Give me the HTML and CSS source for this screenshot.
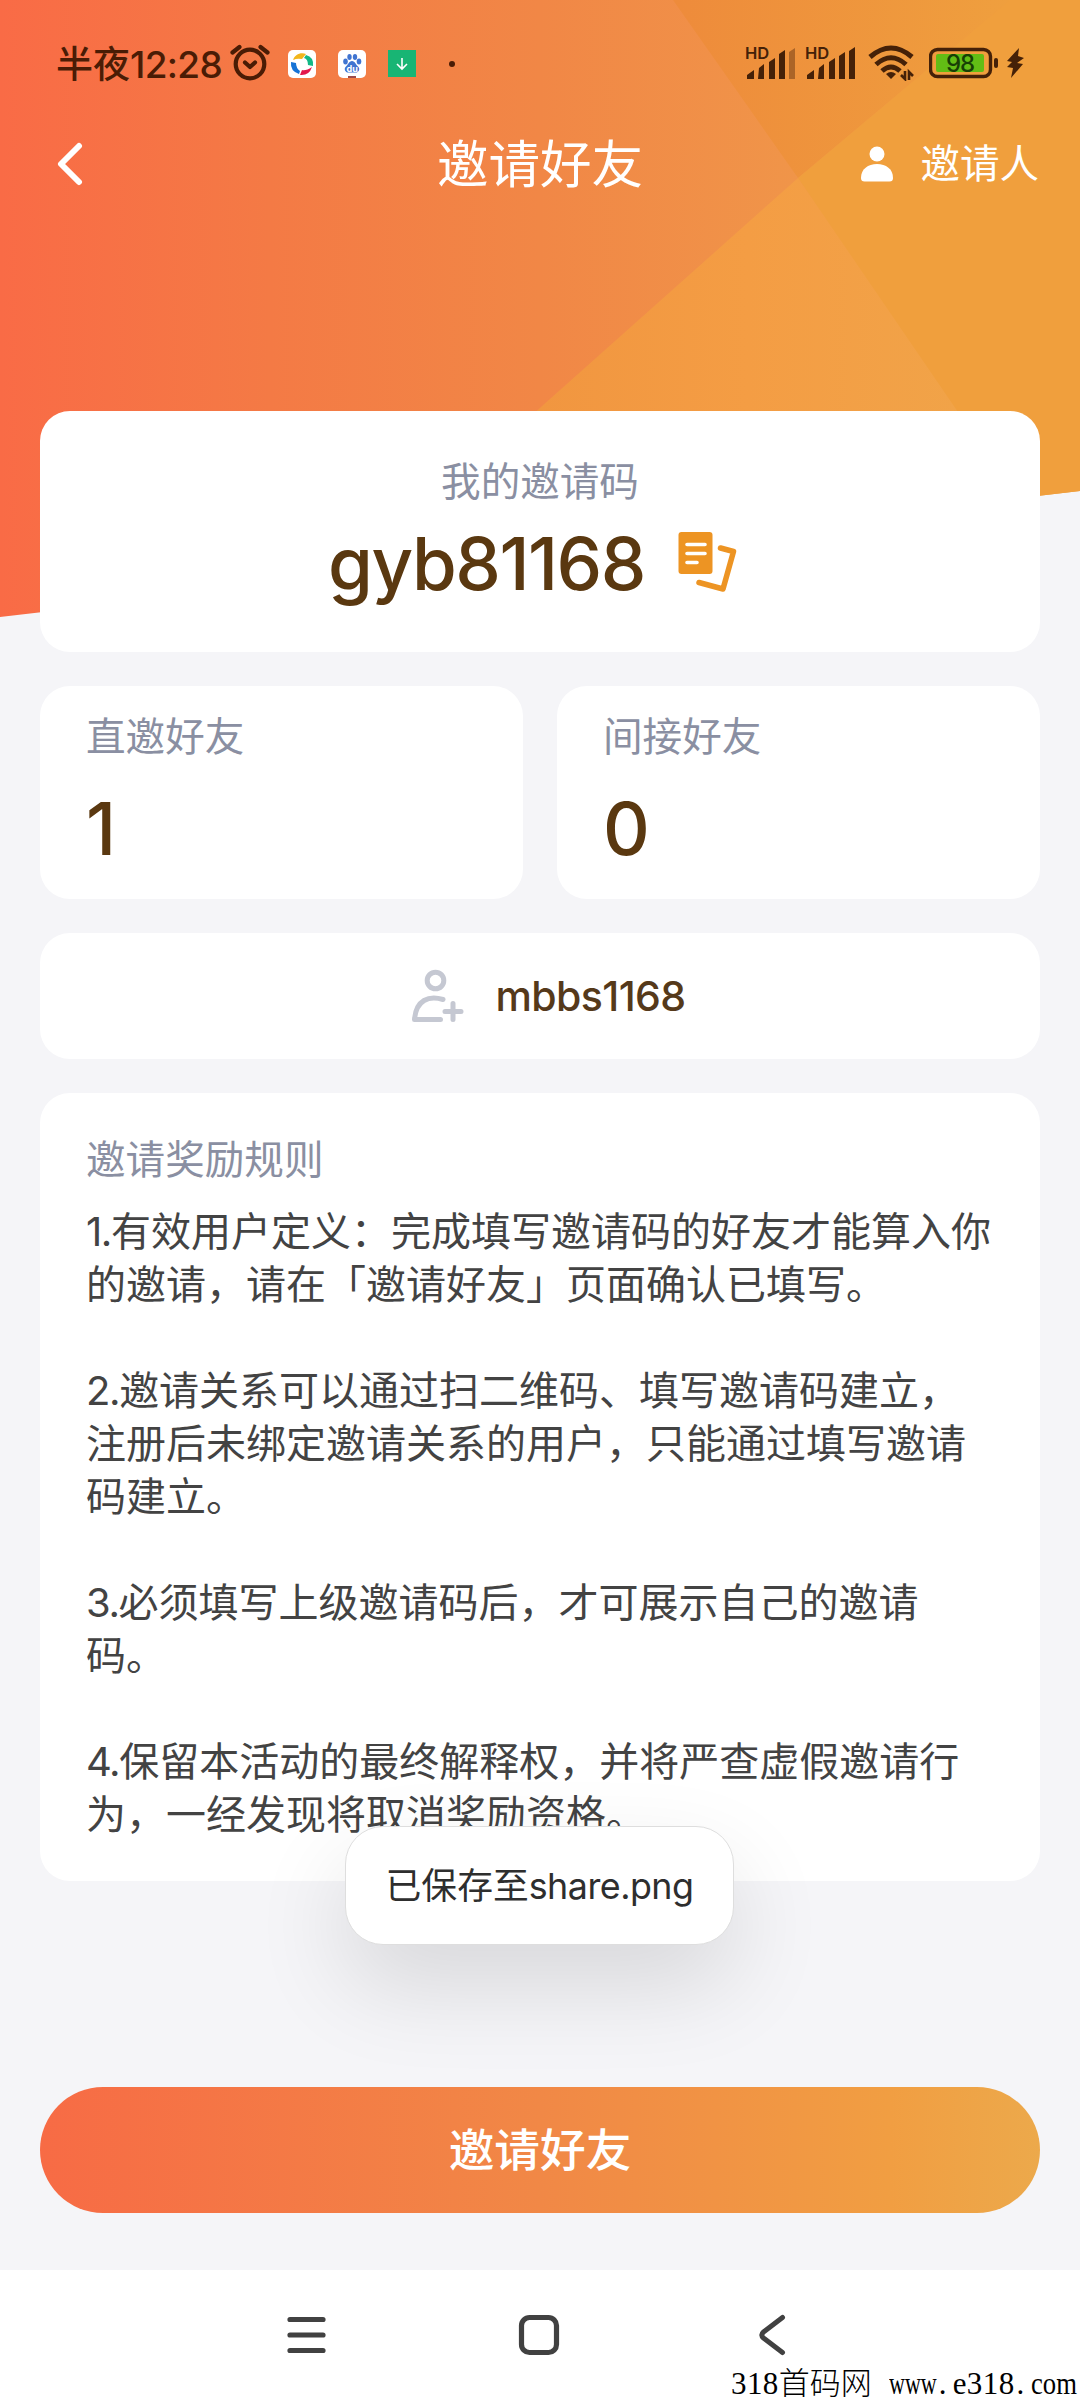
FILE: index.html
```html
<!DOCTYPE html>
<html lang="zh-CN">
<head>
<meta charset="utf-8">
<title>邀请好友</title>
<link rel="stylesheet" href="styles.css">
</head>
<body>
<div class="page">
  <svg class="hero" viewBox="0 0 1080 620" aria-hidden="true">
    <defs>
      <linearGradient id="base" gradientUnits="userSpaceOnUse" x1="0" y1="0" x2="1080" y2="0">
        <stop offset="0" stop-color="#f96b46"/>
        <stop offset=".25" stop-color="#f47a45"/>
        <stop offset=".5" stop-color="#f18746"/>
        <stop offset=".74" stop-color="#f09549"/>
        <stop offset="1" stop-color="#f0a040"/>
      </linearGradient>
      <linearGradient id="top" gradientUnits="userSpaceOnUse" x1="673" y1="0" x2="1010" y2="0">
        <stop offset="0" stop-color="#ee8b3b"/>
        <stop offset="1" stop-color="#ef9f3e"/>
      </linearGradient>
      <linearGradient id="low" gradientUnits="userSpaceOnUse" x1="537" y1="0" x2="957" y2="0">
        <stop offset="0" stop-color="#f19640"/>
        <stop offset=".5" stop-color="#f49d44"/>
        <stop offset="1" stop-color="#f1a348"/>
      </linearGradient>
    </defs>
    <path fill="url(#base)" d="M0 0H1080V491L0 617Z"/>
    <path fill="url(#top)" d="M673 0H1010L798 178Z"/>
    <path fill="#f09f3d" d="M1010 0H1080V491L1012 499L798 178Z"/>
    <path fill="url(#low)" d="M798 178L960 415H532Z"/>
  </svg>

  <header class="status">
    <div class="status-side">
      <span class="clock">半夜<span class="clock-digits">12:28</span></span>
      <svg class="alarm" width="40" height="38" viewBox="0 0 40 38" fill="none" stroke="#4a1c05" stroke-width="4.2" stroke-linecap="round" stroke-linejoin="round"><circle cx="20" cy="21" r="14.3"/><path d="M15 19.5l5 4.5 5-4.5M2.500 9.500L9.500 4M37.500 9.500L30.500 4"/></svg>
      <svg class="app" width="28" height="28" viewBox="0 0 28 28"><rect width="28" height="28" rx="5" fill="#fff"/><path fill="#f2b61c" d="M5 10C7 4 13 2 18 4L14 9Q9 8 5 10Z"/><path fill="#12b886" d="M18 5Q26 7 25 16L20 15Q20 9 16 8Z"/><path fill="#e3174b" d="M24 17Q21 26 12 25L14 20Q18 21 24 17Z"/><path fill="#1673d6" d="M11 24Q2 21 3 12L8 13Q8 18 12 21Z"/></svg>
      <svg class="app" width="28" height="28" viewBox="0 0 28 28"><rect width="28" height="28" rx="5" fill="#fff"/><g fill="#3f74d1"><ellipse cx="7.500" cy="11.500" rx="2.300" ry="2.900"/><ellipse cx="11.500" cy="7" rx="2.200" ry="3"/><ellipse cx="17" cy="7" rx="2.200" ry="3"/><ellipse cx="21" cy="11.500" rx="2.300" ry="2.900"/><path d="M14 11C17 11 18 15 20 16.500C23 19 20 23 17.500 22.500H10.500C8 23 5 19 8 16.500C10 15 11 11 14 11Z"/></g><text x="14.200" y="21.500" class="du">du</text><path d="M10 27h8" stroke="#9c4a4a" stroke-width="2"/></svg>
      <svg class="app" width="28" height="28" viewBox="0 0 28 28"><rect width="28" height="27" fill="#18b574"/><path d="M14 8v11M9 14l5 5 5-5" fill="none" stroke="#fff" stroke-width="1.600"/></svg>
      <i class="dot"></i>
    </div>
    <div class="status-side">
      <svg class="signal" width="50" height="34" viewBox="0 0 50 34" fill="#452108"><text class="hd" x="0" y="13">HD</text><path d="M2 29l7-5v9H2zM14 22l5-4v15h-6zM24 16l6-4v21h-6zM34 8l6-4v29h-6z"/><path opacity=".4" d="M44 6l6-4v31h-6z"/></svg>
      <svg class="signal" width="50" height="34" viewBox="0 0 50 34" fill="#452108"><text class="hd" x="0" y="13">HD</text><path d="M2 29l7-5v9H2zM14 22l5-4v15h-6zM24 16l6-4v21h-6zM34 10l6-4v27h-6zM44 5l6-4v32h-6z"/></svg>
      <svg class="wifi" width="46" height="36" viewBox="0 0 46 36"><g fill="none" stroke="#452108" stroke-width="5"><path d="M2 12Q23-6 44 12"/><path d="M8 19.500Q23 6 38 19.500"/><path d="M14 26Q23 18 32 26"/></g><path fill="#452108" d="M18 29Q23 25 28 29L23 34Z"/><path stroke="#452108" stroke-width="2.600" fill="none" d="M37 26v8l-4-4M41 35v-8l4 4"/></svg>
      <svg class="battery" width="70" height="32" viewBox="0 0 70 32"><rect x="1.500" y="2.500" width="60" height="27" rx="7" fill="none" stroke="#452108" stroke-width="3.400"/><rect x="7" y="7" width="48" height="18" rx="2" fill="#62bd15"/><rect x="65" y="11" width="4" height="10" rx="2" fill="#452108"/><text x="31" y="24.500" class="charge">98</text></svg>
      <svg class="bolt" width="19" height="32" viewBox="0 0 19 32"><path fill="#452108" d="M13 1L1 14l5 1-5 5 6 1-2 10L17 17l-6-1 7-5-6-2z"/></svg>
    </div>
  </header>

  <nav class="titlebar">
    <svg class="back" width="28" height="44" viewBox="0 0 28 44" fill="none" stroke="#fff" stroke-width="6" stroke-linecap="round" stroke-linejoin="round"><path d="M23 4L5 22L23 40"/></svg>
    <h1 class="title">邀请好友</h1>
    <div class="inviter">
      <svg width="34" height="38" viewBox="0 0 34 38" fill="#fff"><circle cx="17" cy="9" r="7.500"/><path d="M1 33C1 24 8 19 17 19S33 24 33 33Q33 36.500 29.500 36.500H4.500Q1 36.500 1 33Z"/></svg>
      <span>邀请人</span>
    </div>
  </nav>

  <main class="cards">
    <section class="card code-card">
      <div class="label">我的邀请码</div>
      <div class="code-row">
        <span class="code">gyb81168</span>
        <svg class="copy" width="60" height="62" viewBox="0 0 60 62"><rect x=".5" y="1" width="34" height="42" rx="3" fill="#ed9423"/><path d="M9 13.500h18M9 22.500h18M9 31.500h10" stroke="#fff" stroke-width="3.600" stroke-linecap="round"/><path d="M42.500 17L55.500 20.500L45 58L21 51.500" fill="none" stroke="#ed9423" stroke-width="5.500" stroke-linecap="round" stroke-linejoin="round"/></svg>
      </div>
    </section>
    <div class="stats">
      <section class="card stat"><div class="label">直邀好友</div><div class="number">1</div></section>
      <section class="card stat"><div class="label">间接好友</div><div class="number">0</div></section>
    </div>
    <section class="card parent">
      <svg width="54" height="54" viewBox="0 0 54 54" fill="none" stroke="#c5c8d2" stroke-width="5" stroke-linecap="round" stroke-linejoin="round"><circle cx="24.500" cy="11.500" r="8.300"/><path d="M32 30.500C18 26 5 31 3.500 50.500H29.500M34 42.500H50M42 34.500V50.500"/></svg>
      <span class="parent-name">mbbs1168</span>
    </section>
    <section class="card rules">
      <h2 class="label">邀请奖励规则</h2>
      <div class="rules-text">
        <p><span class="n">1.</span>有效用户定义：完成填写邀请码的好友才能算入你<br>的邀请，请在「邀请好友」页面确认已填写。</p>
        <p><span class="n">2.</span>邀请关系可以通过扫二维码、填写邀请码建立，<br>注册后未绑定邀请关系的用户，只能通过填写邀请<br>码建立。</p>
        <p><span class="n">3.</span>必须填写上级邀请码后，才可展示自己的邀请<br>码。</p>
        <p><span class="n">4.</span>保留本活动的最终解释权，并将严查虚假邀请行<br>为，一经发现将取消奖励资格。</p>
      </div>
    </section>
  </main>

  <button class="invite" type="button">邀请好友</button>

  <footer class="sysnav">
    <svg width="42" height="42" viewBox="0 0 42 42" stroke="#414141" stroke-width="5.200" stroke-linecap="round"><path d="M5 5.500H38M5 21H38M5 36.500H38"/></svg>
    <svg width="42" height="42" viewBox="0 0 42 42"><rect x="3.500" y="3.500" width="35" height="35" rx="8" fill="none" stroke="#414141" stroke-width="5.200"/></svg>
    <svg width="42" height="42" viewBox="0 0 42 42" fill="none" stroke="#414141" stroke-width="5" stroke-linecap="round"><path d="M31.500 3.500L12.500 18Q9 21 12.500 24L31.500 38.500"/></svg>
  </footer>

  <div class="toast">已保存至<span class="file">share.png</span></div>
  <div class="watermark"><span class="digits">318</span><span class="site">首码网</span><span class="www">www</span><span class="point">.</span><span class="digits">e318</span><span class="point">.</span><span class="com">com</span></div>
</div>
</body>
</html>
```
FILE: styles.css
```css
* { box-sizing: border-box; }
body { margin: 0; background: #f5f5f8; }
h1, h2, p { margin: 0; font-weight: 400; }
svg { display: block; flex: none; }

.page {
  position: relative;
  display: flex;
  flex-direction: column;
  width: 1080px;
  height: 2400px;
  overflow: hidden;
  background: #f5f5f8;
  font-family: Inter, "Noto Sans CJK SC", sans-serif;
  color: #434343;
}
.hero { position: absolute; top: 0; left: 0; width: 1080px; height: 620px; }
.status, .titlebar, .cards, .invite { position: relative; }

/* system status bar */
.status {
  display: flex;
  justify-content: space-between;
  height: 128px;
  padding: 0 55px 0 56px;
  color: #4a1c05;
}
.status-side { display: flex; align-items: center; }
.clock { width: 174px; padding-bottom: 5px; font-size: 37px; font-weight: 500; white-space: nowrap; }
.clock-digits { letter-spacing: -.7px; }
.alarm { margin: -4px 18px 0 0; }
.app { margin: -1px 22px 0 0; }
.du { font: 700 9px Inter, sans-serif; fill: #fff; text-anchor: middle; }
.dot { width: 6px; height: 6px; margin-left: 11px; border-radius: 50%; background: #4a1c05; }
.signal { margin: -3px 10px 0 0; overflow: visible; }
.hd { font: 600 16.500px Inter, sans-serif; }
.wifi { margin: -2px 15px 0 3px; }
.battery { margin: -2px 7px 0 0; }
.bolt { margin-top: -2px; }
.charge { font: 500 24px Inter, sans-serif; letter-spacing: -1px; fill: #173f05; text-anchor: middle; }

/* page title bar */
.titlebar {
  display: grid;
  grid-template-columns: 1fr auto 1fr;
  align-items: center;
  height: 72px;
  padding: 0 41px;
  color: #fff;
}
.back { margin-left: 15px; }
.title { font-size: 51.500px; line-height: 72px; }
.inviter {
  display: flex;
  align-items: center;
  justify-content: flex-end;
  gap: 27px;
  font-size: 39.500px;
  line-height: 54px;
}

/* content cards */
.cards { display: flex; flex-direction: column; gap: 34px; margin-top: 211px; padding: 0 40px; }
.card { border-radius: 30px; background: #fff; }
.label { font-size: 39.600px; line-height: 54px; color: #8a8fa2; }
.code-card {
  display: flex;
  flex-direction: column;
  align-items: center;
  gap: 15px;
  height: 241px;
  padding-top: 44px;
}
.code-row { display: flex; align-items: center; gap: 33px; margin-left: -14px; }
.copy { margin-top: -4px; }
.code, .number { font-size: 72.500px; font-weight: 500; line-height: 80px; color: #5a3810; }
.code { letter-spacing: -1.500px; }
.stats { display: grid; grid-template-columns: 1fr 1fr; gap: 34px; }
.stat { height: 213px; padding: 24px 47px 0 46px; }
.number { margin-top: 25px; }
.parent {
  display: flex;
  align-items: center;
  justify-content: center;
  gap: 30px;
  height: 126px;
  padding-left: 17px;
}
.parent-name { font-size: 41px; font-weight: 500; color: #55391a; letter-spacing: -.6px; }
.rules { height: 788px; padding: 40px 40px 0 46px; }
.rules-text {
  display: flex;
  flex-direction: column;
  gap: 53px;
  margin-top: 18px;
  font-size: 40px;
  line-height: 53px;
  white-space: nowrap;
}
.n { letter-spacing: -1.400px; }

/* primary action */
.invite {
  height: 126px;
  margin: 206px 40px 0;
  padding: 2px 0 0;
  border: 0;
  border-radius: 63px;
  background: linear-gradient(90deg, #f76b45, #f18846 50%, #f19e42 85%, #eca94b);
  color: #fff;
  font: 500 45.700px/124px Inter, "Noto Sans CJK SC", sans-serif;
}

/* system navigation */
.sysnav {
  display: flex;
  align-items: flex-start;
  justify-content: center;
  gap: 191px;
  height: 130px;
  margin-top: 57px;
  padding: 44px 2px 0 0;
  background: #fff;
}

.toast {
  position: absolute;
  top: 1826px;
  left: 345px;
  width: 389px;
  height: 119px;
  border: 1px solid #dedede;
  border-radius: 38px;
  background: #fff;
  box-shadow: 0 40px 95px rgba(0, 0, 0, .12);
  color: #2e2e2e;
  font-size: 35.800px;
  line-height: 118px;
  text-align: center;
  white-space: nowrap;
}
.file { letter-spacing: -.5px; }

.watermark {
  position: absolute;
  top: 2368px;
  left: 731px;
  display: flex;
  width: 349px;
  color: #000;
  font: 31px/32px "Liberation Serif", "Noto Sans CJK SC", serif;
  white-space: nowrap;
}
.digits { letter-spacing: .4px; }
.site { width: 110px; font-weight: 300; }
.www { width: 48px; transform: scaleX(.71); transform-origin: left; }
.point { width: 16px; padding-left: 2px; }
.com { width: 47px; transform: scaleX(.86); transform-origin: left; }
```
